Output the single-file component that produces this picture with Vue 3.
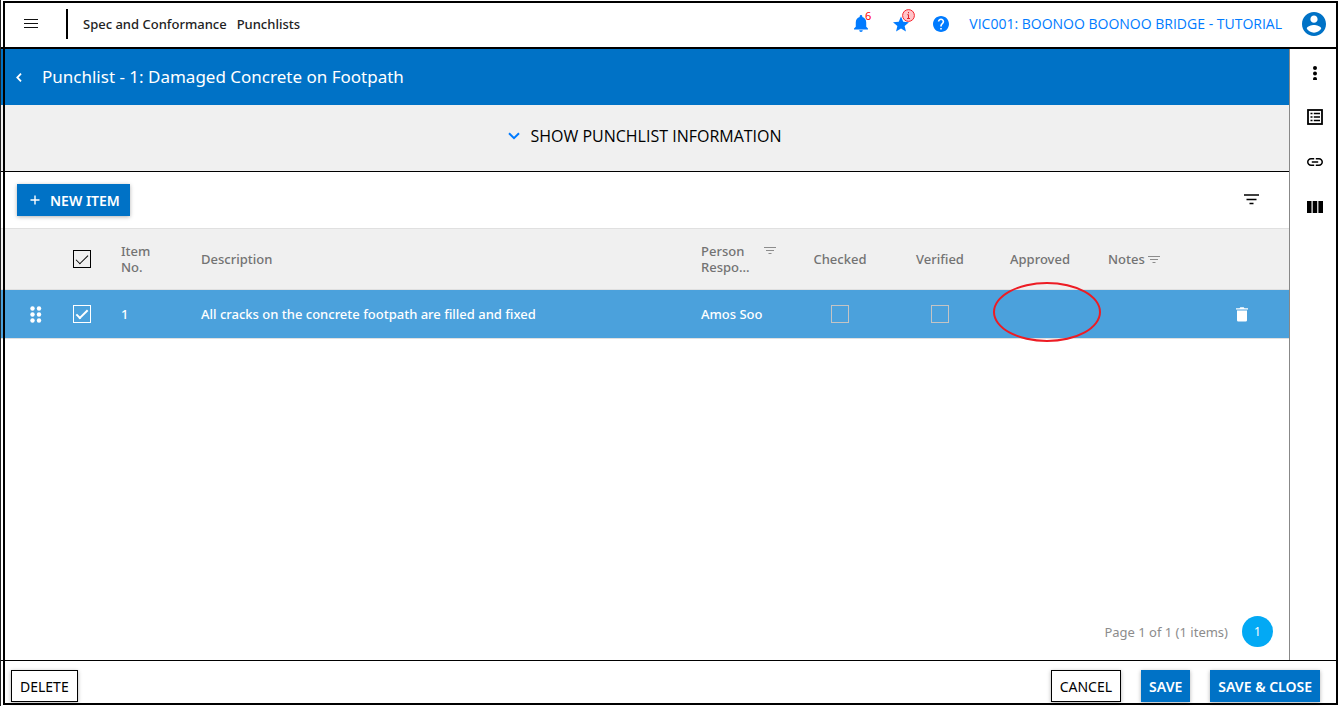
<script setup>
import { ref } from 'vue'

const allSelected = ref(true)
const rows = ref([
  {
    no: 1,
    description: 'All cracks on the concrete footpath are filled and fixed',
    person: 'Amos Soo',
    selected: true,
    checked: false,
    verified: false,
  },
])
</script>

<template>
  <div class="app">
    <header class="topbar">
      <button class="icon-btn menu" aria-label="Menu">
        <svg width="14" height="9" viewBox="0 0 14 9"><path d="M0 .5h14M0 4.5h14M0 8.5h14" stroke="#111" stroke-width="1" /></svg>
      </button>
      <span class="divider"></span>
      <nav class="crumbs">
        <a href="#">Spec and Conformance</a>
        <a href="#">Punchlists</a>
      </nav>
      <div class="tools">
        <button class="icon-btn tool" aria-label="Notifications">
          <svg width="14" height="17" viewBox="4 2.5 16 19.5"><path fill="#007bff" d="M12 22c1.1 0 2-.9 2-2h-4c0 1.1.89 2 2 2zm6-6v-5c0-3.07-1.64-5.64-4.5-6.32V4c0-.83-.67-1.5-1.5-1.5s-1.5.67-1.5 1.5v.68C7.63 5.36 6 7.92 6 11v5l-2 2v1h16v-1l-2-2z" /></svg>
          <span class="count">6</span>
        </button>
        <button class="icon-btn tool" aria-label="Favourites">
          <svg width="16" height="16" viewBox="2 2 20 19"><path fill="#007bff" d="M12 17.27L18.18 21l-1.64-7.03L22 9.24l-7.19-.61L12 2 9.19 8.63 2 9.24l5.46 4.73L5.82 21z" /></svg>
          <svg class="info" width="13" height="13" viewBox="0 0 13 13"><circle cx="6.5" cy="6.5" r="5.9" fill="#ffc4c8" stroke="#f5222d" stroke-width="1" /><path d="M6.5 3v1.3M5.3 5.7h1.200v3.5M5 9.5h3" stroke="#e0202a" stroke-width="1" fill="none" /></svg>
        </button>
        <button class="icon-btn tool" aria-label="Help">
          <svg width="16" height="16" viewBox="2 2 20 20"><path fill="#007bff" d="M12 2C6.48 2 2 6.48 2 12s4.48 10 10 10 10-4.48 10-10S17.52 2 12 2zm1 17h-2v-2h2v2zm2.07-7.75l-.9.92C13.45 12.9 13 13.5 13 15h-2v-.5c0-1.1.45-2.1 1.17-2.83l1.24-1.26c.37-.36.59-.86.59-1.41 0-1.1-.9-2-2-2s-2 .9-2 2H8c0-2.21 1.79-4 4-4s4 1.79 4 4c0 .88-.36 1.68-.93 2.25z" /></svg>
        </button>
      </div>
      <a class="project" href="#">VIC001: BOONOO BOONOO BRIDGE - TUTORIAL</a>
      <button class="icon-btn" aria-label="Account">
        <svg width="24" height="24" viewBox="2 2 20 20"><path fill="#0072c6" d="M12 2C6.48 2 2 6.48 2 12s4.48 10 10 10 10-4.48 10-10S17.52 2 12 2zm0 3c1.66 0 3 1.34 3 3s-1.34 3-3 3-3-1.34-3-3 1.34-3 3-3zm0 14.2c-2.5 0-4.71-1.28-6-3.22.03-1.99 4-3.08 6-3.08 1.99 0 5.97 1.09 6 3.08-1.29 1.94-3.5 3.22-6 3.22z" /></svg>
      </button>
    </header>

    <div class="body">
      <main class="main">
        <div class="title-bar">
          <button class="icon-btn back" aria-label="Back">
            <svg width="6" height="9" viewBox="0 0 6 9"><path d="M5 .7L1.3 4.5 5 8.3" fill="none" stroke="#fff" stroke-width="1.8" /></svg>
          </button>
          <h1>Punchlist - 1: Damaged Concrete on Footpath</h1>
        </div>

        <button class="show-info">
          <svg width="12" height="8" viewBox="0 0 12 8"><path d="M1 1.2l5 5 5-5" fill="none" stroke="#007bff" stroke-width="2" /></svg>
          SHOW PUNCHLIST INFORMATION
        </button>

        <div class="toolbar">
          <button class="btn primary new-item">
            <svg width="10" height="10" viewBox="0 0 10 10"><path d="M5 .5v9M.5 5h9" stroke="#fff" stroke-width="1.4" /></svg>
            NEW ITEM
          </button>
          <button class="icon-btn" aria-label="Filter">
            <svg width="15" height="12" viewBox="0 0 15 12"><path d="M0 1h15M2.5 5.5h10M5.5 9.5h4" stroke="#000" stroke-width="1.5" /></svg>
          </button>
        </div>

        <table>
          <colgroup>
            <col class="c-drag" /><col class="c-select" /><col class="c-no" /><col /><col class="c-person" />
            <col class="c-flag" /><col class="c-flag" /><col class="c-flag" /><col class="c-notes" /><col class="c-action" />
          </colgroup>
          <thead>
            <tr>
              <th></th>
              <th class="center"><input v-model="allSelected" type="checkbox" class="box dark" aria-label="Select all" /></th>
              <th>Item<br />No.</th>
              <th>Description</th>
              <th>
                <div class="person-head">
                  <span>Person<br />Respo...</span>
                  <svg width="12" height="8" viewBox="0 0 12 8"><path d="M0 .5h12M2 3.5h8M4.5 6.5h3" stroke="#8c8c8c" stroke-width="1" /></svg>
                </div>
              </th>
              <th class="center">Checked</th>
              <th class="center">Verified</th>
              <th class="center">Approved</th>
              <th class="notes">
                Notes
                <svg width="12" height="8" viewBox="0 0 12 8"><path d="M0 .5h12M2 3.5h8M4.5 6.5h3" stroke="#8c8c8c" stroke-width="1" /></svg>
              </th>
              <th></th>
            </tr>
          </thead>
          <tbody>
            <tr v-for="row in rows" :key="row.no">
              <td class="drag">
                <svg width="12" height="17" viewBox="0 0 12 17" fill="#fff"><circle cx="2.5" cy="2.5" r="2.2" /><circle cx="9" cy="2.5" r="2.2" /><circle cx="2.5" cy="8.5" r="2.2" /><circle cx="9" cy="8.5" r="2.2" /><circle cx="2.5" cy="14.5" r="2.2" /><circle cx="9" cy="14.5" r="2.2" /></svg>
              </td>
              <td class="center"><input v-model="row.selected" type="checkbox" class="box light" aria-label="Select item" /></td>
              <td>{{ row.no }}</td>
              <td>{{ row.description }}</td>
              <td>{{ row.person }}</td>
              <td class="center"><input v-model="row.checked" type="checkbox" class="box grey" aria-label="Checked" /></td>
              <td class="center"><input v-model="row.verified" type="checkbox" class="box grey" aria-label="Verified" /></td>
              <td class="approved"><span class="ring"></span></td>
              <td></td>
              <td class="center">
                <button class="icon-btn trash" aria-label="Delete item">
                  <svg width="12" height="15" viewBox="0 0 12 15" fill="#fff"><path d="M0 1.2h3.5L4.3.3h3.4l.8.9H12v1.4H0zM1 3.4h10v9.8q0 1.3-1.3 1.3H2.3Q1 14.5 1 13.2z" /></svg>
                </button>
              </td>
            </tr>
          </tbody>
        </table>

        <div class="pager">
          <span>Page 1 of 1 (1 items)</span>
          <button class="page">1</button>
        </div>
      </main>

      <aside class="rail">
        <button class="icon-btn" aria-label="More">
          <svg width="16" height="14" viewBox="0 1 16 14"><circle cx="8" cy="3" r="2" /><circle cx="8" cy="8.500" r="2" /><circle cx="8" cy="14" r="2" /></svg>
        </button>
        <button class="icon-btn" aria-label="Details">
          <svg width="16" height="16" viewBox="0 0 16 16"><rect x="1" y="1" width="14" height="14" fill="none" stroke="#000" stroke-width="1.8" /><path d="M3.5 4.5h2M3.5 8h2M3.5 11.5h2M6.8 4.5H13M6.8 8H13M6.8 11.5H13" stroke="#000" stroke-width="1.4" /></svg>
        </button>
        <button class="icon-btn" aria-label="Links">
          <svg width="16" height="16" viewBox="2 2 20 20"><path d="M3.9 12c0-1.71 1.39-3.1 3.1-3.1h4V7H7c-2.76 0-5 2.24-5 5s2.24 5 5 5h4v-1.9H7c-1.71 0-3.1-1.39-3.1-3.1zM8 13h8v-2H8v2zm9-6h-4v1.9h4c1.71 0 3.1 1.39 3.1 3.1s-1.39 3.1-3.1 3.1h-4V17h4c2.76 0 5-2.24 5-5s-2.24-5-5-5z" /></svg>
        </button>
        <button class="icon-btn" aria-label="Columns">
          <svg width="16" height="16" viewBox="0 0 16 16"><path d="M0 2h4.500v12H0zM5.700 2h4.500v12H5.700zM11.400 2H16v12h-4.600z" /></svg>
        </button>
      </aside>
    </div>

    <footer class="footer">
      <button class="btn outline delete">DELETE</button>
      <button class="btn outline">CANCEL</button>
      <button class="btn primary">SAVE</button>
      <button class="btn primary">SAVE &amp; CLOSE</button>
    </footer>
    <div class="frame"></div>
  </div>
</template>

<style>
body {
  margin: 0;
}
</style>

<style scoped>
.app {
  position: relative;
  box-sizing: border-box;
  display: flex;
  flex-direction: column;
  min-height: 100vh;
  border-left: 1px solid #222;
  background: #fff;
  color: #222;
  font-family: "Noto Sans", "Open Sans", sans-serif;
  font-size: 13px;
  font-weight: 500;
  line-height: 16px;
}
.frame {
  position: absolute;
  inset: 1px 0 1px 2px;
  border: 2px solid #000;
  pointer-events: none;
}
button {
  font-family: inherit;
  cursor: pointer;
}
svg {
  display: block;
}
a {
  color: inherit;
  text-decoration: none;
}
.icon-btn {
  display: flex;
  align-items: center;
  justify-content: center;
  padding: 0;
  border: 0;
  background: none;
}
.topbar {
  display: flex;
  align-items: center;
  height: 47px;
  padding: 0 12px 0 23px;
  border-bottom: 2px solid #000;
}
.divider {
  width: 2px;
  height: 30px;
  margin: 0 15px 0 28px;
  background: #000;
}
.crumbs {
  display: flex;
  gap: 10px;
}
.tools {
  display: flex;
  gap: 24px;
  margin-left: auto;
  margin-right: 20px;
}
.tool {
  position: relative;
  width: 16px;
  height: 18px;
}
.count {
  position: absolute;
  top: -6px;
  right: -2px;
  color: #f00;
  font-size: 11px;
  line-height: 14px;
}
.info {
  position: absolute;
  top: -6px;
  right: -6px;
}
.project {
  margin-right: 20px;
  color: #007bff;
  font-family: "Open Sans", sans-serif;
  font-size: 14px;
  font-weight: 400;
}
.body {
  display: flex;
  flex: 1;
}
.main {
  display: flex;
  flex: 1;
  flex-direction: column;
  min-width: 0;
}
.title-bar {
  display: flex;
  align-items: center;
  gap: 20px;
  height: 56px;
  padding-left: 15px;
  background: #0072c6;
  color: #fff;
}
h1 {
  margin: 0;
  font-size: 17px;
  font-weight: 400;
  line-height: 24px;
}
.show-info {
  display: flex;
  align-items: center;
  justify-content: center;
  gap: 10px;
  height: 67px;
  padding: 0 0 4px;
  border: 0;
  border-bottom: 1px solid #000;
  background: #f0f0f0;
  color: #000;
  font-family: "Open Sans", sans-serif;
  font-size: 16px;
}
.toolbar {
  display: flex;
  align-items: center;
  justify-content: space-between;
  height: 56px;
  padding: 0 30px 0 16px;
}
.btn {
  display: flex;
  align-items: center;
  justify-content: center;
  height: 32px;
  padding: 0 8px;
  border: 0;
  font-size: 14px;
  box-shadow: 0 1px 4px rgba(0, 0, 0, 0.3);
}
.primary {
  background: #0072c6;
  color: #fff;
  font-weight: 600;
}
.outline {
  border: 1px solid #000;
  background: #fff;
  color: #000;
}
.new-item {
  gap: 10px;
  padding: 0 10px 0 13px;
}
table {
  width: 100%;
  table-layout: fixed;
  border-spacing: 0;
}
.c-drag { width: 50px; }
.c-select { width: 62px; }
.c-no { width: 80px; }
.c-person { width: 97px; }
.c-flag { width: 100px; }
.c-notes { width: 104px; }
.c-action { width: 95px; }
th,
td {
  padding: 0 8px;
  text-align: left;
  vertical-align: middle;
}
th {
  height: 60px;
  border-top: 1px solid #e0e0e0;
  border-bottom: 1px solid #e0e0e0;
  background: #f0f0f0;
  color: #737373;
  font-weight: 500;
}
td {
  height: 48px;
  border-bottom: 1px solid #e0e0e0;
  background: #4ba1dc;
  color: #fff;
}
.center {
  padding: 0;
  text-align: center;
}
.center .icon-btn {
  margin: 0 auto;
}
.drag {
  padding-left: 29px;
}
.person-head {
  display: flex;
  justify-content: space-between;
  padding-right: 6px;
}
.person-head svg {
  margin-top: 4px;
}
.notes {
  padding-left: 18px;
}
.notes svg {
  display: inline-block;
}
.approved {
  position: relative;
}
.ring {
  position: absolute;
  top: -8px;
  left: 3px;
  box-sizing: border-box;
  width: 108px;
  height: 60px;
  border: 2px solid #ed1c24;
  border-radius: 50%;
}
.box {
  appearance: none;
  display: block;
  box-sizing: border-box;
  width: 18px;
  height: 18px;
  margin: 0 auto;
  border: 1px solid;
}
.box::before {
  content: "";
  display: block;
  box-sizing: border-box;
  width: 12px;
  height: 6px;
  margin: 4px 0 0 2px;
  border: solid;
  border-width: 0 0 1px 1px;
  transform: rotate(-45deg);
  visibility: hidden;
}
.box:checked::before {
  visibility: visible;
}
.dark { color: #000; }
.light { color: #fff; }
.light::before { border-width: 0 0 2px 2px; }
.grey { color: #c4c4c4; }
.pager {
  display: flex;
  align-items: center;
  justify-content: flex-end;
  gap: 14px;
  margin-top: auto;
  padding: 0 16px 13px;
  color: #8c8c8c;
  font-weight: 400;
}
.page {
  width: 31px;
  height: 31px;
  padding: 0;
  border: 0;
  border-radius: 50%;
  background: #03a9f4;
  color: #fff;
  font-size: 12px;
}
.rail {
  display: flex;
  flex-direction: column;
  align-items: center;
  gap: 29px;
  box-sizing: border-box;
  width: 49px;
  padding: 17px 0 0 2px;
  border-left: 1px solid #888;
}
.footer {
  display: flex;
  gap: 20px;
  padding: 9px 18px 4px 10px;
  border-top: 1px solid #000;
}
.delete {
  margin-right: auto;
}
</style>
